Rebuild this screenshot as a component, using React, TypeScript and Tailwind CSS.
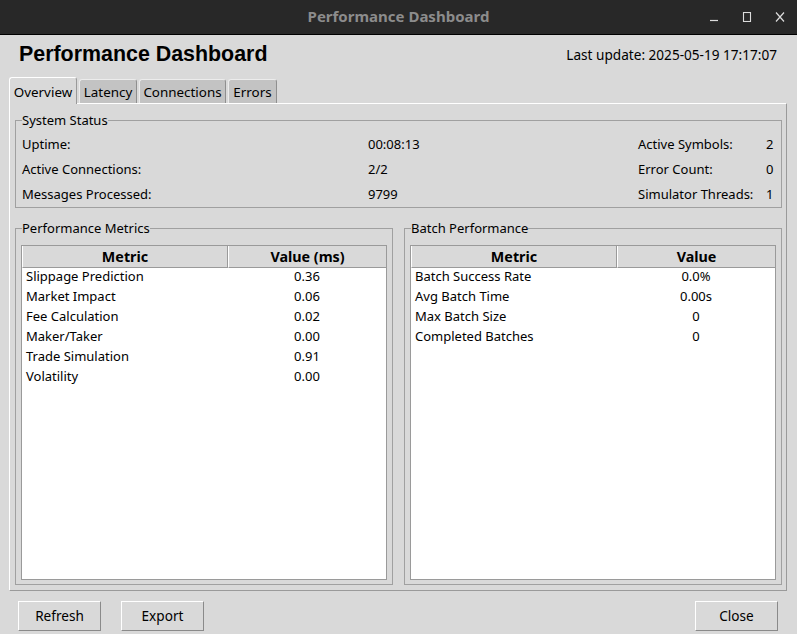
const perfRows = [
  ["Slippage Prediction", "0.36"],
  ["Market Impact", "0.06"],
  ["Fee Calculation", "0.02"],
  ["Maker/Taker", "0.00"],
  ["Trade Simulation", "0.91"],
  ["Volatility", "0.00"],
];

const batchRows = [
  ["Batch Success Rate", "0.0%"],
  ["Avg Batch Time", "0.00s"],
  ["Max Batch Size", "0"],
  ["Completed Batches", "0"],
];

const tabs = [
  { name: "Overview", w: "w-[68px]" },
  { name: "Latency", w: "w-[58px]" },
  { name: "Connections", w: "w-[87px]" },
  { name: "Errors", w: "w-[49px]" },
];

function TitleBar() {
  return (
    <div className="h-[35px] shrink-0 grid grid-cols-[1fr_auto_1fr] items-center bg-[#282828] border-b border-black">
      <div />
      <div className="text-[15px] font-bold text-[#8c8c8c] -mt-[1px]">Performance Dashboard</div>
      <div className="flex justify-end pr-[1px] text-[#dcdcdc]">
        <div className="w-[33px] flex justify-center">
          <svg width="10" height="10" viewBox="0 0 10 10">
            <line x1="1" y1="8.5" x2="9" y2="8.5" stroke="currentColor" strokeWidth="1.2" />
          </svg>
        </div>
        <div className="w-[33px] flex justify-center">
          <svg width="10" height="10" viewBox="0 0 10 10">
            <rect x="1.5" y="0.5" width="7" height="9" fill="none" stroke="currentColor" strokeWidth="1.1" />
          </svg>
        </div>
        <div className="w-[33px] flex justify-center">
          <svg width="10" height="10" viewBox="0 0 10 10">
            <path d="M1 0.5 L9 9.5 M9 0.5 L1 9.5" stroke="currentColor" strokeWidth="1.2" />
          </svg>
        </div>
      </div>
    </div>
  );
}

function DataTable({ head, rows }: { head: string[]; rows: string[][] }) {
  return (
    <div className="flex-1 flex flex-col bg-white border border-[#9a9a9a]">
      <div className="grid grid-cols-[206px_1fr] h-[21px] bg-[#d9d9d9] font-bold text-[14.3px]">
        <div className="flex items-center justify-center border-r border-b border-[#9a9a9a] border-l border-l-white">{head[0]}</div>
        <div className="flex items-center justify-center border-b border-[#9a9a9a] border-l border-l-white">{head[1]}</div>
      </div>
      {rows.map((r) => (
        <div key={r[0]} className="grid grid-cols-[206px_1fr] h-[20px] items-center">
          <div className="pl-[4px]">{r[0]}</div>
          <div className="text-center">{r[1]}</div>
        </div>
      ))}
    </div>
  );
}

function Btn({ label }: { label: string }) {
  return (
    <button className="w-[83px] h-[30px] pt-[1px] text-[13.6px] bg-[#d9d9d9] border border-t-white border-l-white border-r-[#8a8a8a] border-b-[#8a8a8a]">
      {label}
    </button>
  );
}

export default function App() {
  return (
    <div className="w-[797px] h-[634px] flex flex-col overflow-hidden bg-[#d9d9d9] text-[13px] text-black font-['Noto_Sans',sans-serif]">
      <TitleBar />

      <header className="h-[38px] shrink-0 flex items-center justify-between pl-[19px] pr-[20px]">
        <h1 className="font-['Liberation_Sans',Arial,sans-serif] font-bold text-[21.4px]">Performance Dashboard</h1>
        <span className="pt-[3px] text-[13.6px]">Last update: 2025-05-19 17:17:07</span>
      </header>

      <div className="mt-[4px] h-[26px] shrink-0 pl-[9px] flex items-end gap-[2px] relative z-10 text-[13.4px]">
        {tabs.map((t, i) =>
          i === 0 ? (
            <div key={t.name} className={`${t.w} h-[27px] -mb-px pt-[3px] flex items-center justify-center bg-[#d9d9d9] border-t border-l border-white border-r border-r-[#9a9a9a] rounded-t-[3px]`}>
              {t.name}
            </div>
          ) : (
            <div key={t.name} className={`${t.w} h-[24px] pt-[2px] flex items-center justify-center bg-[#c3c3c3] border-t border-l border-[#ececec] border-r border-r-[#8f8f8f] rounded-t-[3px]`}>
              {t.name}
            </div>
          )
        )}
      </div>

      <div className="ml-[9px] mr-[10px] h-[488px] shrink-0 flex flex-col pl-[5px] pr-[4px] pt-[7px] pb-[5px] border-t border-l border-white border-r border-b border-r-[#9a9a9a] border-b-[#9a9a9a]">
        <fieldset className="min-w-0 border border-[#a0a0a0] pl-[6px] pt-[3px]">
          <legend className="leading-[18px]">System Status</legend>
          <div className="grid grid-cols-[346px_270px_1fr_15px] auto-rows-[25px] items-center">
            <div>Uptime:</div>
            <div>00:08:13</div>
            <div>Active Symbols:</div>
            <div>2</div>
            <div>Active Connections:</div>
            <div>2/2</div>
            <div>Error Count:</div>
            <div>0</div>
            <div>Messages Processed:</div>
            <div>9799</div>
            <div>Simulator Threads:</div>
            <div>1</div>
          </div>
        </fieldset>

        <div className="mt-[11px] flex-1 flex gap-[11px] min-h-0">
          <fieldset className="flex-1 min-w-0 flex flex-col border border-[#a0a0a0] px-[5px] pt-[8px] pb-[4px]">
            <legend className="ml-[1px] leading-[18px]">Performance Metrics</legend>
            <DataTable head={["Metric", "Value (ms)"]} rows={perfRows} />
          </fieldset>
          <fieldset className="flex-1 min-w-0 flex flex-col border border-[#a0a0a0] px-[5px] pt-[8px] pb-[4px]">
            <legend className="ml-[1px] leading-[18px]">Batch Performance</legend>
            <DataTable head={["Metric", "Value"]} rows={batchRows} />
          </fieldset>
        </div>
      </div>

      <div className="pt-[10px] px-[18px] flex justify-between">
        <div className="flex gap-[20px]">
          <Btn label="Refresh" />
          <Btn label="Export" />
        </div>
        <div className="pr-px">
          <Btn label="Close" />
        </div>
      </div>
    </div>
  );
}
